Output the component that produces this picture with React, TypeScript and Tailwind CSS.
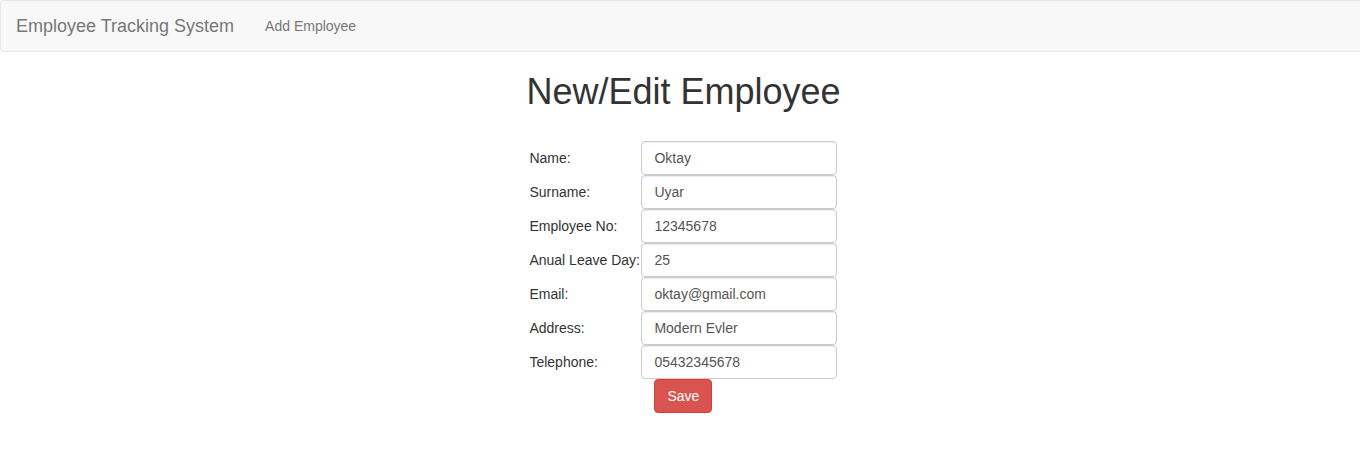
import React from "react";

const rows: [string, string][] = [
  ["Name:", "Oktay"],
  ["Surname:", "Uyar"],
  ["Employee No:", "12345678"],
  ["Anual Leave Day:", "25"],
  ["Email:", "oktay@gmail.com"],
  ["Address:", "Modern Evler"],
  ["Telephone:", "05432345678"],
];

export default function App() {
  return (
    <div
      className="min-h-[470px] bg-white text-[14px] leading-[20px] text-[#333]"
      style={{ fontFamily: '"Liberation Sans", Arial, sans-serif' }}
    >
      <nav className="flex h-[52px] items-center rounded-l-[4px] border border-r-0 border-[#e7e7e7] bg-[#f8f8f8]">
        <span className="px-[15px] text-[18px] leading-[20px] text-[#777]">Employee Tracking System</span>
        <span className="ml-[1px] px-[15px] text-[14px] leading-[20px] text-[#777]">Add Employee</span>
      </nav>
      <div className="flex justify-center pl-[7px]">
        <div className="flex flex-col items-center">
          <h1 className="mt-[20px] mb-[29px] text-[36px] leading-[40px] font-normal text-[#333]">New/Edit Employee</h1>
          <div className="flex flex-col self-stretch pl-[3px]">
            {rows.map(([label, value]) => (
              <div key={label} className="flex h-[34px] items-center">
                <span className="w-[112px] shrink-0 whitespace-nowrap text-[#333]">{label}</span>
                <input
                  readOnly
                  value={value}
                  className="h-[34px] w-[196px] rounded-[4px] border border-[#ccc] bg-white px-[12px] py-[6px] text-[14px] text-[#555] shadow-[inset_0_1px_1px_rgba(0,0,0,0.075)] outline-none"
                  style={{ fontFamily: '"Liberation Sans", Arial, sans-serif' }}
                />
              </div>
            ))}
            <div className="flex">
              <div className="w-[125px] shrink-0" />
              <button className="h-[34px] rounded-[4px] border border-[#d43f3a] bg-[#d9534f] px-[12px] text-[14px] leading-[20px] text-white">
                Save
              </button>
            </div>
          </div>
        </div>
      </div>
    </div>
  );
}
